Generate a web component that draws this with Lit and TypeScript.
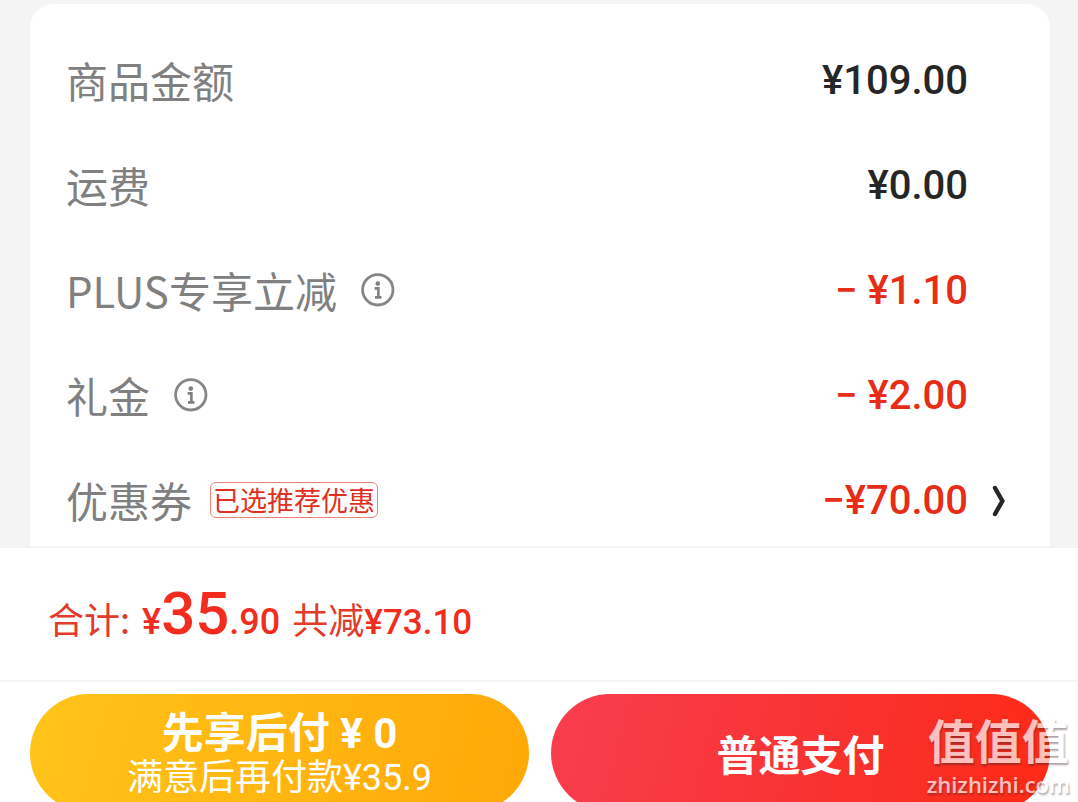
import { LitElement, html, css, svg, nothing } from "lit";
import { customElement, property } from "lit/decorators.js";

interface Line {
  label: string;
  amount: string;
  discount?: boolean;
  info?: boolean;
  tag?: string;
}

const LINES: Line[] = [
  { label: "商品金额", amount: "¥109.00" },
  { label: "运费", amount: "¥0.00" },
  { label: "PLUS专享立减", amount: "− ¥1.10", discount: true, info: true },
  { label: "礼金", amount: "− ¥2.00", discount: true, info: true },
  { label: "优惠券", amount: "−¥70.00", discount: true, tag: "已选推荐优惠" },
];

const infoIcon = svg`
  <svg viewBox="0 0 34 34" width="34" height="34" aria-hidden="true">
    <circle cx="16.8" cy="16.8" r="15.2" fill="none" stroke="#868686" stroke-width="2.8"/>
    <circle cx="16.8" cy="10.6" r="2.3" fill="#808080"/>
    <path d="M13.6 15.4H17.4V24M14 24.4H20.4" fill="none" stroke="#808080" stroke-width="2.6"/>
  </svg>`;

const chevron = svg`
  <svg viewBox="0 0 14 32" width="14" height="32" aria-hidden="true">
    <path d="M3 3L10.4 16L3 29" fill="none" stroke="#262626" stroke-width="4.4" stroke-linecap="round"/>
  </svg>`;

@customElement("price-row")
class PriceRow extends LitElement {
  @property({ attribute: false }) line!: Line;

  static styles = css`
    :host {
      display: grid;
      grid-template-columns: 1fr auto 44px;
      align-items: center;
      height: 60px;
      line-height: 58px;
    }
    .label {
      display: flex;
      align-items: center;
      padding-bottom: 2px;
      font-size: 42px;
      color: #808080;
    }
    .amount {
      font: 500 40px/60px Roboto, "Noto Sans CJK SC", sans-serif;
      color: #262626;
      white-space: pre;
    }
    .discount {
      color: #e72d17;
    }
    .icon {
      display: flex;
      padding: 0;
      border: 0;
      background: none;
      cursor: pointer;
    }
    .info {
      margin-left: 24px;
    }
    .more {
      justify-self: end;
      margin-right: 6px;
    }
    .tag {
      margin-left: 18px;
      padding: 0 2px;
      border: 1px solid #ee8277;
      border-radius: 6px;
      font-size: 27px;
      line-height: 34px;
      color: #e12f1d;
    }
  `;

  render() {
    const { label, amount, discount, info, tag } = this.line;
    return html`
      <span class="label">
        ${label}
        ${info
          ? html`<button class="icon info" aria-label="${label}说明">${infoIcon}</button>`
          : nothing}
        ${tag ? html`<span class="tag">${tag}</span>` : nothing}
      </span>
      <span class="amount ${discount ? "discount" : ""}">${amount}</span>
      ${tag
        ? html`<button class="icon more" aria-label="选择${label}">${chevron}</button>`
        : nothing}
    `;
  }
}

@customElement("app-root")
class AppRoot extends LitElement {
  static styles = css`
    :host {
      display: block;
      position: relative;
      height: 100vh;
      overflow: hidden;
      background: #f4f4f4;
      font-family: "Noto Sans CJK SC", sans-serif;
    }
    .card {
      display: flex;
      flex-direction: column;
      gap: 45px;
      margin: 4px 28px 0 30px;
      padding: 47px 38px 15px 36px;
      border-radius: 24px 24px 0 0;
      background: #fff;
    }
    .footer {
      border-top: 2px solid #f4f4f4;
      background: #fff;
    }
    .total {
      display: flex;
      align-items: baseline;
      padding: 26px 48px 17px;
      border-bottom: 2px solid #f6f6f6;
      font-size: 36px;
      line-height: 80px;
      color: #e33a2a;
    }
    .num {
      font-family: Roboto, "Noto Sans CJK SC", sans-serif;
      font-weight: 500;
      color: #f22d20;
    }
    .sum {
      margin: 0 12px;
    }
    .big {
      font-size: 60px;
    }
    .saved {
      font-size: 35px;
    }
    .actions {
      display: grid;
      grid-template-columns: 1fr 1fr;
      gap: 22px;
      padding: 12px 28px 12px 30px;
    }
    .pay {
      display: flex;
      flex-direction: column;
      align-items: center;
      justify-content: center;
      height: 118px;
      padding: 6px 0 0;
      border: 0;
      border-radius: 59px;
      font-family: Roboto, "Noto Sans CJK SC", sans-serif;
      color: #fff;
      cursor: pointer;
    }
    .later {
      background: linear-gradient(105deg, #ffc41a, #ffa807);
    }
    .now {
      background: linear-gradient(105deg, #f83e50, #f92f28 70%, #ff2a14);
    }
    .title {
      font-size: 42px;
      font-weight: 700;
      line-height: 45px;
    }
    .note {
      font-size: 36px;
      line-height: 45px;
    }
    .mark {
      position: absolute;
      right: 8px;
      bottom: 4px;
      display: flex;
      flex-direction: column;
      align-items: center;
      gap: 6px;
      color: #fff;
      text-shadow: 1px 2px 2px rgba(60, 40, 40, 0.6);
      opacity: 0.7;
      pointer-events: none;
    }
    .mark-name {
      font-size: 47px;
      font-weight: 700;
      line-height: 50px;
    }
    .mark-site {
      font: 600 22px/28px "Open Sans", sans-serif;
    }
  `;

  render() {
    return html`
      <main class="card">
        ${LINES.map((line) => html`<price-row .line=${line}></price-row>`)}
      </main>
      <footer class="footer">
        <div class="total">
          <span>合计:</span>
          <span class="num sum">¥<span class="big">35</span>.90</span>
          <span>共减<span class="num saved">¥73.10</span></span>
        </div>
        <div class="actions">
          <button class="pay later">
            <span class="title">先享后付 ¥ 0</span>
            <span class="note">满意后再付款¥35.9</span>
          </button>
          <button class="pay now"><span class="title">普通支付</span></button>
        </div>
      </footer>
      <div class="mark">
        <span class="mark-name">值值值</span>
        <span class="mark-site">zhizhizhi.com</span>
      </div>
    `;
  }
}
